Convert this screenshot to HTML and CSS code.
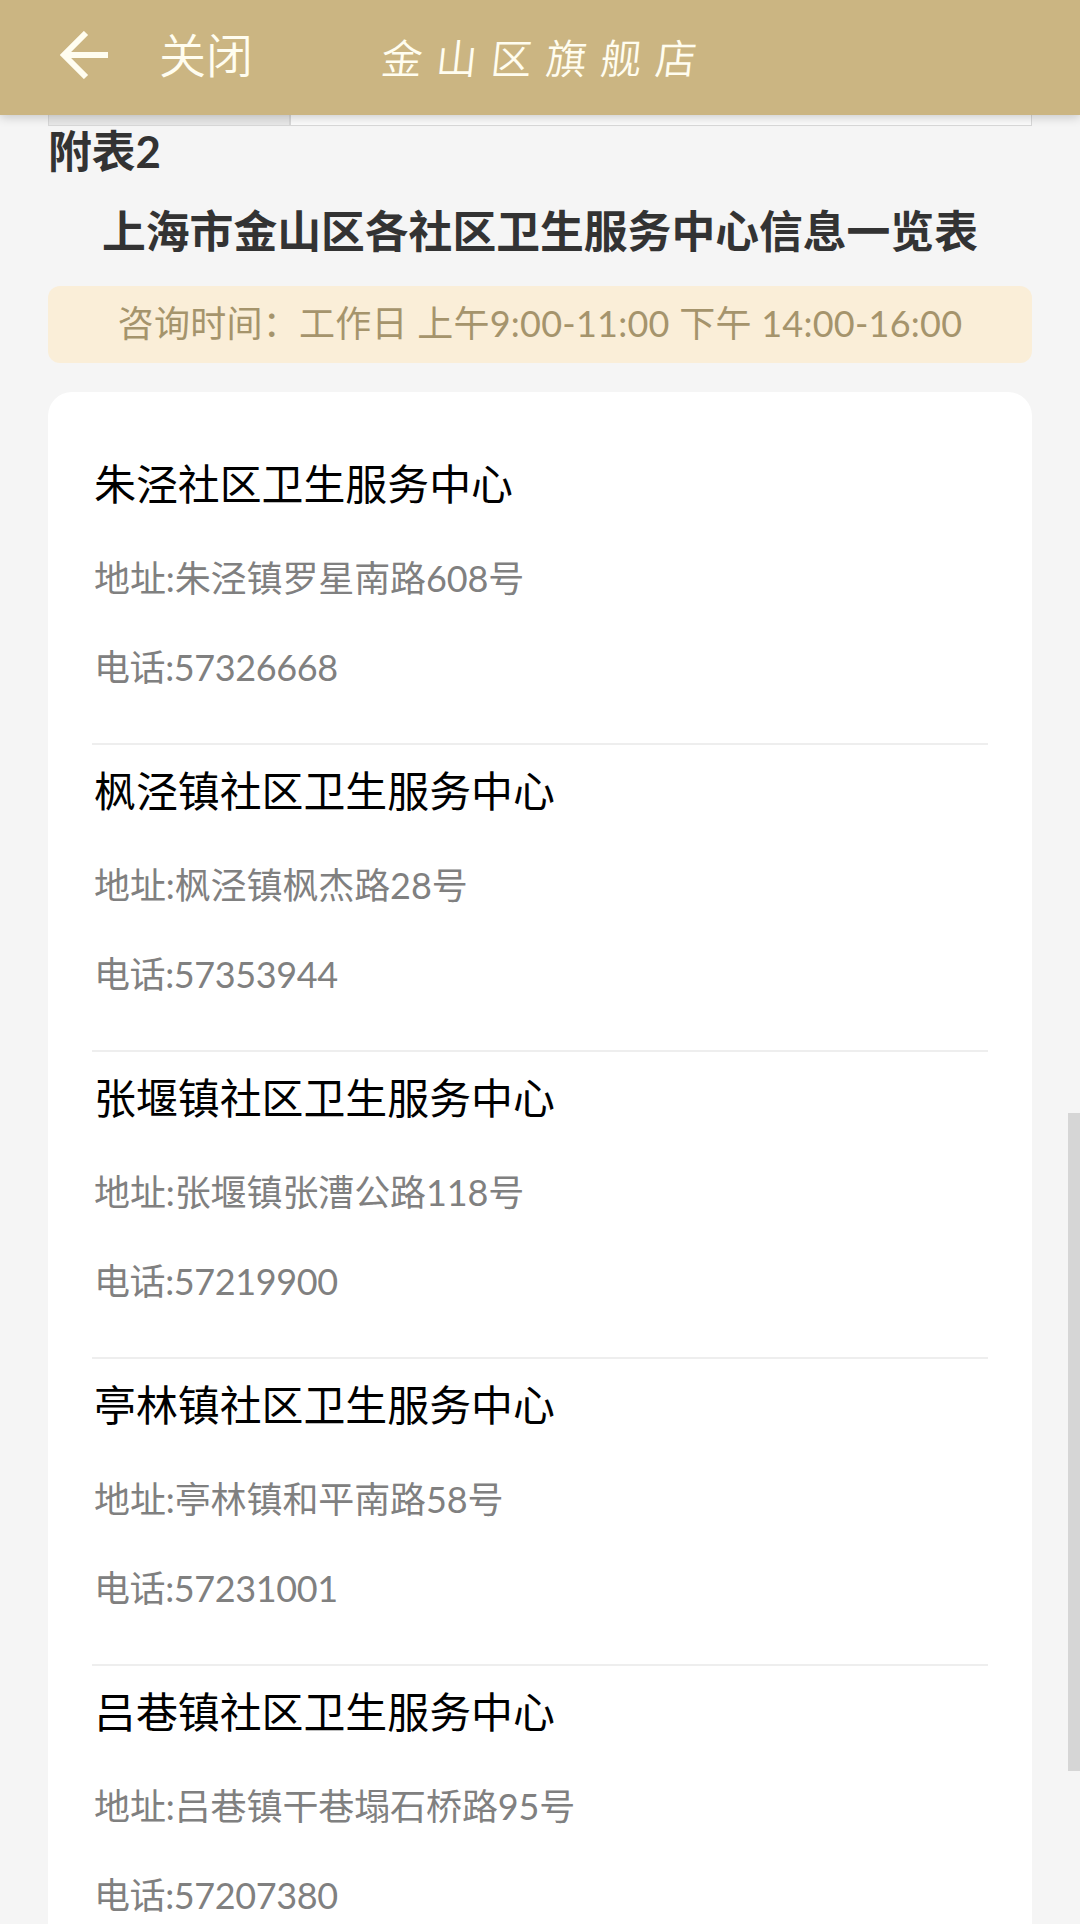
FILE: index.html
```html
<!DOCTYPE html>
<html lang="zh-CN">
<head>
  <meta charset="UTF-8" />
  <meta name="viewport" content="width=device-width, initial-scale=1.0">
  <title>金山区旗舰店</title>
  <link rel="stylesheet" href="styles.css">
</head>
<body>

  <header>
    <svg class="back-icon" viewBox="0 0 48 48" fill="none" stroke="currentColor" stroke-width="6">
      <path d="M26 2 L4 24 L26 46" />
      <path d="M4 24 H48" />
    </svg>
    <span class="close">关闭</span>
    <h1>金山区旗舰店</h1>
  </header>

  <main>
    <!-- bottom edge of the previous table -->
    <div class="table-end">
      <div class="cell-label"></div>
      <div class="cell-value"></div>
    </div>

    <h2 class="table-no">附表2</h2>
    <h2 class="table-title">上海市金山区各社区卫生服务中心信息一览表</h2>

    <div class="notice">咨询时间：工作日 上午9:00-11:00 下午 14:00-16:00</div>

    <div class="card">
      <section class="center">
        <h3>朱泾社区卫生服务中心</h3>
        <p>地址:朱泾镇罗星南路608号</p>
        <p class="phone">电话:57326668</p>
      </section>
      <section class="center">
        <h3>枫泾镇社区卫生服务中心</h3>
        <p>地址:枫泾镇枫杰路28号</p>
        <p class="phone">电话:57353944</p>
      </section>
      <section class="center">
        <h3>张堰镇社区卫生服务中心</h3>
        <p>地址:张堰镇张漕公路118号</p>
        <p class="phone">电话:57219900</p>
      </section>
      <section class="center">
        <h3>亭林镇社区卫生服务中心</h3>
        <p>地址:亭林镇和平南路58号</p>
        <p class="phone">电话:57231001</p>
      </section>
      <section class="center">
        <h3>吕巷镇社区卫生服务中心</h3>
        <p>地址:吕巷镇干巷塌石桥路95号</p>
        <p class="phone">电话:57207380</p>
      </section>
    </div>
  </main>

  <div class="scroll-thumb"></div>

</body>
</html>
```
FILE: styles.css
```css
:root {
  --gold: #cbb582;
  --page-bg: #f5f5f5;
  --notice-bg: #faeed8;
  --notice-text: #a5946c;
  --gray-text: #808080;
}

* {
  box-sizing: border-box;
  margin: 0;
  padding: 0;
}

body {
  position: relative;
  height: 100vh;
  overflow: hidden;
  background-color: var(--page-bg);
  font-family: Lato, "Noto Sans CJK SC", sans-serif;
}

header {
  position: relative;
  z-index: 10;
  display: flex;
  align-items: center;
  height: 115px;
  padding: 0 60px 5px;
  background-color: var(--gold);
  color: #fffdf0;
  box-shadow: 0 2px 10px rgba(0,0,0,0.2);
}

.back-icon {
  width: 48px;
  height: 48px;
}

.close {
  margin-left: 51px;
  font-size: 47px;
  line-height: 60px;
  font-weight: 350;
}

h1 {
  margin-left: 129px;
  padding-top: 2px;
  font-family: "Noto Sans CJK SC", cursive;
  font-size: 41px;
  line-height: 60px;
  font-weight: 350;
  letter-spacing: 13.8px;
  white-space: nowrap;
  transform: skewX(-6deg);
}

main {
  padding: 0 48px;
}

.table-end {
  display: flex;
  height: 11px;
  border: 1px solid #d8d8d8;
  border-top: none;
}

.cell-label {
  width: 242px;
  background-color: #e8e8e8;
  border-right: 2px solid #d8d8d8;
}

.cell-value {
  flex: 1;
  background-color: #fbfbfb;
}

h2 {
  font-size: 43.8px;
  font-weight: 700;
  color: #333;
}

.table-no {
  line-height: 50px;
}

.table-title {
  margin-top: 27px;
  line-height: 56px;
  text-align: center;
  white-space: nowrap;
}

.notice {
  height: 77px;
  margin-top: 27px;
  border-radius: 12px;
  background-color: var(--notice-bg);
  color: var(--notice-text);
  font-size: 36px;
  line-height: 75px;
  letter-spacing: 0.25px;
  text-align: center;
  white-space: nowrap;
}

.card {
  margin-top: 29px;
  padding: 46px 44px 0;
  border-radius: 24px 24px 0 0;
  background-color: #fff;
}

.center {
  height: 307px;
  padding-top: 16px;
  border-bottom: 2px solid #eee;
}

.center h3 {
  padding-left: 2px;
  font-size: 41.9px;
  font-weight: 400;
  line-height: 60px;
  color: #000;
}

.center p {
  margin-top: 39px;
  padding-left: 2px;
  font-size: 36px;
  line-height: 50px;
  letter-spacing: -0.1px;
  color: var(--gray-text);
}

.center .phone {
  letter-spacing: -0.4px;
}

/* scrollbar overlay on the right edge */
.scroll-thumb {
  position: absolute;
  top: 1113px;
  right: 0;
  width: 12px;
  height: 658px;
  background-color: #d6d6d6;
}
```
